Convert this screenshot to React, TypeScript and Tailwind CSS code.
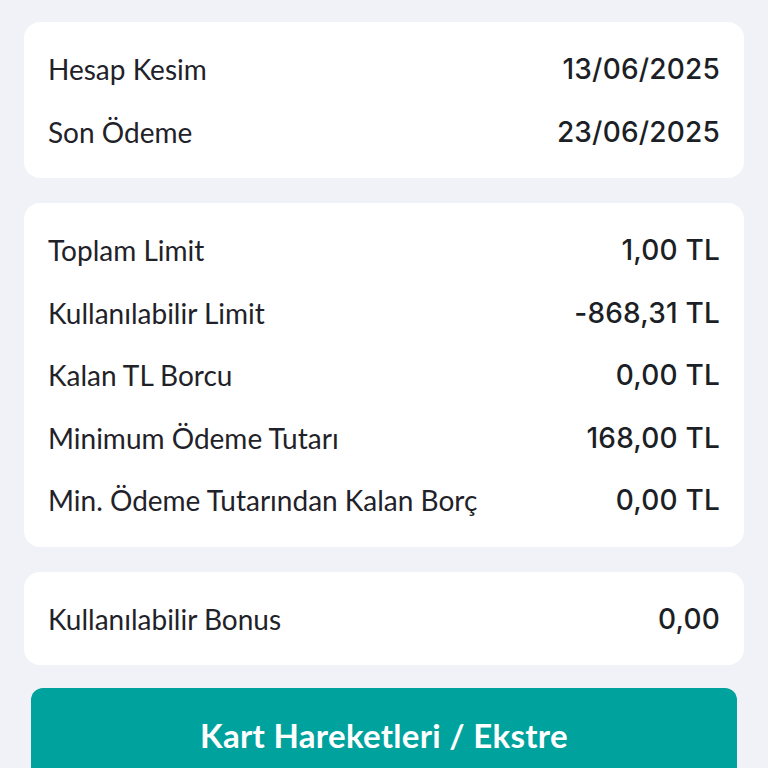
const dates = [
  { label: 'Hesap Kesim', value: '13/06/2025' },
  { label: 'Son Ödeme', value: '23/06/2025' },
]

const limits = [
  { label: 'Toplam Limit', value: '1,00 TL' },
  { label: 'Kullanılabilir Limit', value: '-868,31 TL' },
  { label: 'Kalan TL Borcu', value: '0,00 TL' },
  { label: 'Minimum Ödeme Tutarı', value: '168,00 TL' },
  { label: 'Min. Ödeme Tutarından Kalan Borç', value: '0,00 TL' },
]

function Row({ label, value }: { label: string; value: string }) {
  return (
    <div className="flex h-[62.5px] items-center justify-between">
      <span className="font-['Lato',sans-serif] text-[28px] text-[#1f2229]">{label}</span>
      <span className="font-['Inter',sans-serif] text-[28px] font-medium tracking-[0.2px] text-[#1c1f26]">
        {value}
      </span>
    </div>
  )
}

export default function App() {
  return (
    <div className="h-[768px] overflow-hidden bg-[#f1f2f7] px-6 pt-[22px]">
      <div className="rounded-2xl bg-white px-6 pt-4 pb-[15px]">
        {dates.map((r) => (
          <Row key={r.label} {...r} />
        ))}
      </div>

      <div className="mt-[25px] rounded-2xl bg-white px-6 pt-4 pb-[15px]">
        {limits.map((r) => (
          <Row key={r.label} {...r} />
        ))}
      </div>

      <div className="mt-[25px] rounded-2xl bg-white px-6 pt-4 pb-[15px]">
        <Row label="Kullanılabilir Bonus" value="0,00" />
      </div>

      <button className="mx-[7px] mt-[23px] flex h-[96px] w-[calc(100%-14px)] items-center justify-center rounded-xl bg-[#00a29e] font-['Lato',sans-serif] text-[33px] font-bold tracking-[0.3px] text-white">
        Kart Hareketleri / Ekstre
      </button>
    </div>
  )
}
